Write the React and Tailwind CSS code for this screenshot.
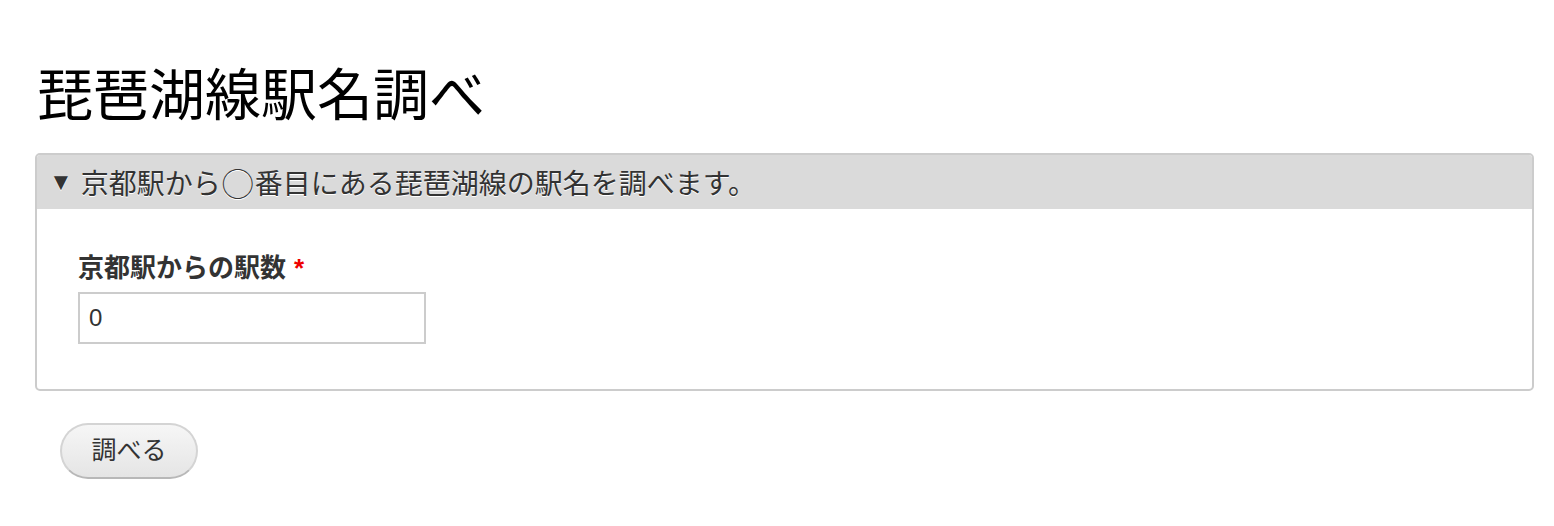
import React from "react";

export default function App() {
  return (
    <div className="min-h-[526px] bg-white px-[35px] pt-[58px] font-[family-name:Liberation_Serif,Noto_Sans_CJK_JP,serif]">
      <h1 className="pl-[2px] text-[56px] font-normal leading-[76px] text-black">
        琵琶湖線駅名調べ
      </h1>

      <div className="mt-[19px] w-[1499px] overflow-hidden rounded-[5px] border-2 border-[#cccccc]">
        <div className="flex h-[54px] items-center bg-[#dadada] pl-[12px] text-[28px] text-[#333333] [text-shadow:0_1px_0_#ffffff]">
          <span className="mr-[8px] font-[family-name:Liberation_Sans,sans-serif] text-[24px]">▼</span>
          <span className="flex items-center font-[family-name:Noto_Sans_CJK_JP,serif]">
            京都駅から
            <span className="inline-block w-[34px] text-center text-[32px] leading-none">◯</span>
            番目にある琵琶湖線の駅名を調べます。
          </span>
        </div>
        <div className="px-[41px] pt-[44px] pb-[45px]">
          <label className="block text-[26px] font-bold leading-[30px] text-[#333333]">
            京都駅からの駅数
            <span className="ml-[8px] font-[family-name:Liberation_Sans,sans-serif] text-[#ee0000]">*</span>
          </label>
          <input
            type="text"
            defaultValue="0"
            className="mt-[8px] block h-[52px] w-[348px] border-2 border-[#cccccc] px-[9px] font-[family-name:Liberation_Sans,Noto_Sans_CJK_JP,sans-serif] text-[24px] text-[#333333] outline-none"
          />
        </div>
      </div>

      <button className="mt-[32px] ml-[25px] h-[56px] w-[138px] rounded-full border-2 border-[#d4d4d4] border-b-[#b8b8b8] bg-gradient-to-b from-[#f6f6f6] to-[#e5e5e5] font-[family-name:Liberation_Sans,Noto_Sans_CJK_JP,sans-serif] text-[25px] text-[#333333]">
        調べる
      </button>
    </div>
  );
}
